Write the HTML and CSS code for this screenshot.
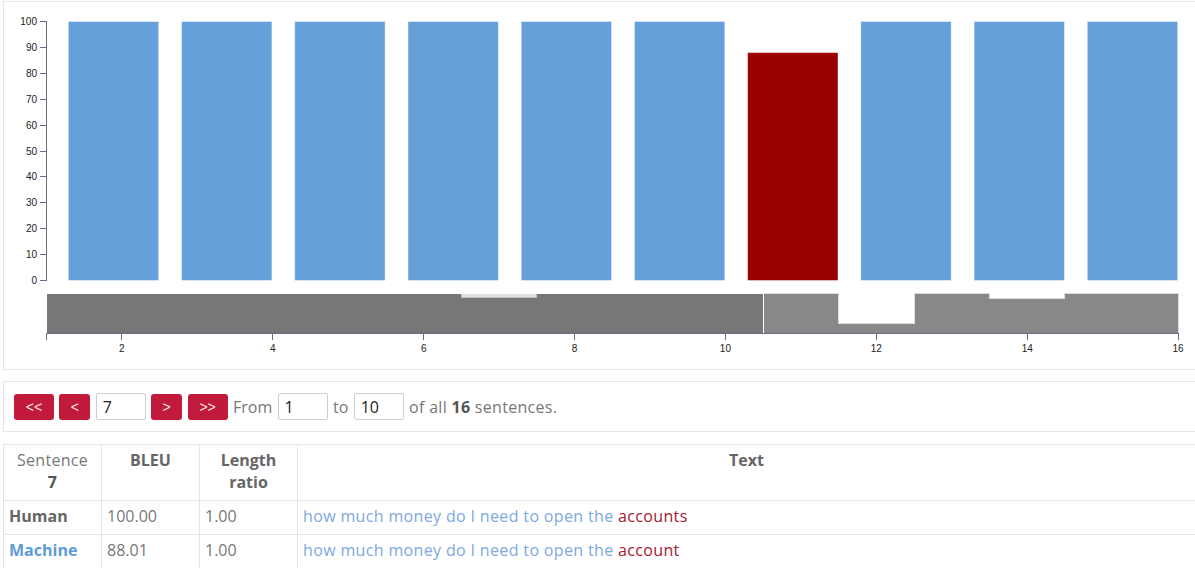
FILE: index.html
```html
<!DOCTYPE html>
<html lang="en">
<head>
<meta charset="utf-8">
<title>Sentence scores</title>
<link rel="stylesheet" href="styles.css">
</head>
<body>
<div class="page">
  <section class="panel chart-panel">
    <svg class="chart" width="1191" height="367" viewBox="4 2 1191 367" xmlns="http://www.w3.org/2000/svg">
      <!-- sentence BLEU bars -->
      <g class="bars">
        <rect class="bar" x="68.3" y="21.5" width="90.4" height="259"/>
        <rect class="bar" x="181.5" y="21.5" width="90.4" height="259"/>
        <rect class="bar" x="294.7" y="21.5" width="90.4" height="259"/>
        <rect class="bar" x="408.0" y="21.5" width="90.4" height="259"/>
        <rect class="bar" x="521.2" y="21.5" width="90.4" height="259"/>
        <rect class="bar" x="634.4" y="21.5" width="90.4" height="259"/>
        <rect class="bar bar-active" x="747.6" y="52.6" width="90.4" height="227.9"/>
        <rect class="bar" x="860.8" y="21.5" width="90.4" height="259"/>
        <rect class="bar" x="974.1" y="21.5" width="90.4" height="259"/>
        <rect class="bar" x="1087.3" y="21.5" width="90.4" height="259"/>
      </g>

      <!-- y axis -->
      <g class="axis">
        <path class="domain" d="M40,21.5H46.5V280.5H40"/>
        <line x1="40" x2="46.5" y1="254.6" y2="254.6"/>
        <line x1="40" x2="46.5" y1="228.7" y2="228.7"/>
        <line x1="40" x2="46.5" y1="202.8" y2="202.8"/>
        <line x1="40" x2="46.5" y1="176.9" y2="176.9"/>
        <line x1="40" x2="46.5" y1="151.0" y2="151.0"/>
        <line x1="40" x2="46.5" y1="125.1" y2="125.1"/>
        <line x1="40" x2="46.5" y1="99.2" y2="99.2"/>
        <line x1="40" x2="46.5" y1="73.3" y2="73.3"/>
        <line x1="40" x2="46.5" y1="47.4" y2="47.4"/>
        <g class="tick-labels y-labels">
          <text x="37" y="284">0</text>
          <text x="37" y="258.1">10</text>
          <text x="37" y="232.2">20</text>
          <text x="37" y="206.3">30</text>
          <text x="37" y="180.4">40</text>
          <text x="37" y="154.5">50</text>
          <text x="37" y="128.6">60</text>
          <text x="37" y="102.7">70</text>
          <text x="37" y="76.8">80</text>
          <text x="37" y="50.9">90</text>
          <text x="37" y="25">100</text>
        </g>
      </g>

      <!-- overview of all sentences with the brushed range -->
      <path class="overview" d="M46.5,293H461.4V297.9H536.8V293H838.5V323H914V293H989.4V298.7H1064.8V293H1178V333.5H46.5Z"/>
      <rect class="selection" x="46.5" y="293" width="716.6" height="40.5"/>

      <!-- x axis -->
      <g class="axis">
        <path class="domain" d="M46.5,340V333.5H1178V340"/>
        <line x1="121.9" x2="121.9" y1="333.5" y2="340"/>
        <line x1="272.8" x2="272.8" y1="333.5" y2="340"/>
        <line x1="423.7" x2="423.7" y1="333.5" y2="340"/>
        <line x1="574.6" x2="574.6" y1="333.5" y2="340"/>
        <line x1="725.4" x2="725.4" y1="333.5" y2="340"/>
        <line x1="876.3" x2="876.3" y1="333.5" y2="340"/>
        <line x1="1027.2" x2="1027.2" y1="333.5" y2="340"/>
        <g class="tick-labels x-labels">
          <text x="121.9" y="351.5">2</text>
          <text x="272.8" y="351.5">4</text>
          <text x="423.7" y="351.5">6</text>
          <text x="574.6" y="351.5">8</text>
          <text x="725.4" y="351.5">10</text>
          <text x="876.3" y="351.5">12</text>
          <text x="1027.2" y="351.5">14</text>
          <text x="1178" y="351.5">16</text>
        </g>
      </g>
    </svg>
  </section>

  <section class="panel pager">
    <button class="btn btn-wide" type="button">&lt;&lt;</button>
    <button class="btn" type="button">&lt;</button>
    <input class="field" type="text" value="7">
    <button class="btn" type="button">&gt;</button>
    <button class="btn btn-wide" type="button">&gt;&gt;</button>
    <span class="label">From</span>
    <input class="field" type="text" value="1">
    <span class="label">to</span>
    <input class="field" type="text" value="10">
    <span class="label label-wide">of all <b>16</b> sentences.</span>
  </section>

  <table class="scores">
    <colgroup>
      <col class="col-narrow">
      <col class="col-narrow">
      <col class="col-narrow">
      <col>
    </colgroup>
    <thead>
      <tr>
        <th class="th-plain">Sentence<br><b>7</b></th>
        <th>BLEU</th>
        <th>Length ratio</th>
        <th>Text</th>
      </tr>
    </thead>
    <tbody>
      <tr>
        <td class="who">Human</td>
        <td>100.00</td>
        <td>1.00</td>
        <td class="sentence"><span class="match">how much money do I need to open the</span> <span class="diff">accounts</span></td>
      </tr>
      <tr>
        <td class="who who-machine">Machine</td>
        <td>88.01</td>
        <td>1.00</td>
        <td class="sentence"><span class="match">how much money do I need to open the</span> <span class="diff">account</span></td>
      </tr>
    </tbody>
  </table>
</div>
</body>
</html>
```

FILE: styles.css
```css
html,
body {
  margin: 0;
  padding: 0;
  background: #fff;
  overflow: hidden;
}

body {
  font-family: "Open Sans", "Noto Sans", sans-serif;
  font-size: 16px;
  color: #777;
}

.page {
  width: 1193px;
  margin-left: 3px;
  padding-top: 1px;
}

.panel {
  border: 1px solid #e6e6e6;
}

/* chart */
.chart-panel {
  height: 367px;
}

.chart {
  display: block;
}

.bar {
  fill: #66a0da;
  stroke: rgba(255, 255, 255, 0.45);
  stroke-width: 1;
}

.bar-active {
  fill: #990000;
}

.axis .domain,
.axis line {
  fill: none;
  stroke: #6c6c84;
  stroke-width: 1;
  shape-rendering: crispEdges;
}

.tick-labels text {
  font-family: "Liberation Sans", Arial, sans-serif;
  font-size: 10px;
  fill: #222;
}

.y-labels text {
  text-anchor: end;
}

.x-labels text {
  text-anchor: middle;
}

.overview {
  fill: #888;
  stroke: #dcdcdc;
  stroke-width: 1;
  shape-rendering: crispEdges;
}

.selection {
  fill: #000;
  fill-opacity: 0.125;
  stroke: #fff;
  stroke-width: 1;
  shape-rendering: crispEdges;
}

/* pager */
.pager {
  margin-top: 11px;
  height: 49px;
  display: flex;
  align-items: center;
  gap: 5.4px;
  padding-left: 10px;
}

.btn {
  height: 26px;
  width: 31px;
  padding: 0;
  border: none;
  border-radius: 3px;
  background: #c21a3b;
  color: #fbe4e8;
  font-family: "Liberation Sans", Arial, sans-serif;
  font-size: 14px;
  line-height: 26px;
}

.btn-wide {
  width: 40px;
}

.field {
  box-sizing: border-box;
  width: 50px;
  height: 27px;
  padding: 0 6px;
  border: 1px solid #cfcfcf;
  border-radius: 2px;
  font-family: "Open Sans", sans-serif;
  font-size: 16px;
  color: #222;
  background: #fff;
}

.label {
  color: #777;
}

.label-wide {
  letter-spacing: 0.3px;
}

.label b {
  color: #555;
}

/* sentence table */
.scores {
  margin-top: 12px;
  width: 1193px;
  border-collapse: collapse;
  table-layout: fixed;
}

.col-narrow {
  width: 98px;
}

.scores th,
.scores td {
  border: 1px solid #e4e4e4;
  line-height: 22px;
  text-align: left;
}

.scores th {
  padding: 4px 6px 7px;
  vertical-align: top;
  text-align: center;
  font-weight: 700;
  color: #666;
}

.scores th.th-plain {
  font-weight: 400;
  color: #777;
  letter-spacing: 0.3px;
}

.scores th.th-plain b {
  color: #555;
}

.scores td {
  padding: 4px 5px 7px;
  color: #777;
}

.scores td.sentence {
  letter-spacing: 0.35px;
}

.scores td.who {
  font-weight: 700;
  color: #666;
}

.scores td.who-machine {
  color: #5d9bda;
}

.match {
  color: #7ea8e2;
}

.diff {
  color: #a3182f;
}
```
